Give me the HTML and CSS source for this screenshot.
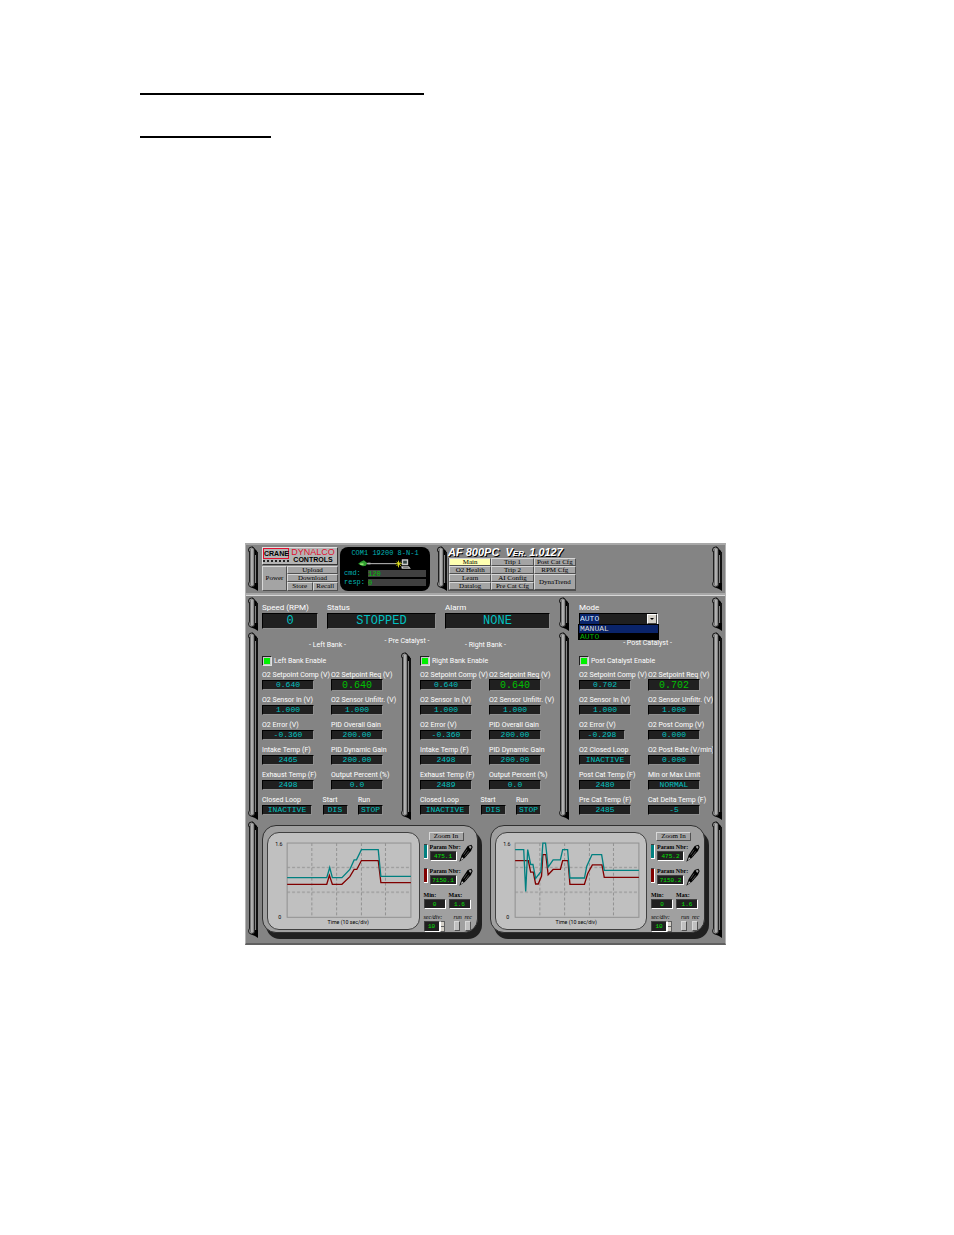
FILE: index.html
```html
<!doctype html>
<html lang="en">
<head>
<meta charset="utf-8">
<title>AF 800PC</title>
<link rel="stylesheet" href="styles.css">
</head>

<body>
<svg class="defs" aria-hidden="true">
	<defs>
		<linearGradient id="bar">
			<stop offset="0" stop-color="#585858"/>
			<stop offset="0.45" stop-color="#c4c4c4"/>
			<stop offset="1" stop-color="#707070"/>
		</linearGradient>
		<!-- rack handle: the middle stretches, the two caps keep their size -->
		<symbol id="handle">
			<path d="M4 0l5 5 1 4H7z" fill="#000"/>
			<rect x="8" y="6" width="2" height="100%" fill="#101010"/>
			<circle cx="3.5" cy="4" r="3" fill="#909090" stroke="#101010"/>
			<rect x="1" y="5" width="6" height="100%" fill="#202020"/>
			<rect x="2" y="3" width="4" height="100%" fill="url(#bar)"/>
			<svg y="100%" overflow="visible">
				<rect x="0" y="-5" width="12" height="6" fill="#848484"/>
				<path d="M2-8h8V0L7-2 2-4z" fill="#000"/>
				<circle cx="3.5" cy="-7" r="3" fill="#909090" stroke="#202020"/>
				<rect x="2" y="-11" width="4" height="5" fill="url(#bar)"/>
			</svg>
		</symbol>
		<symbol id="pen" viewBox="0 0 42 54">
			<path d="M1 53L8 33 26 6 37 2l4 7-5 12-19 21z" fill="#000"/>
			<path d="M29 8l5-3 4 4-4 6z" fill="#a0a0a0"/>
			<path d="M14 32l10-15M18 37l11-15" stroke="#707070" stroke-width="2"/>
			<path d="M9 40l5 3-9 6z" fill="#c8c8c8"/>
		</symbol>
		<pattern id="grid" width="375" height="225" patternUnits="userSpaceOnUse">
			<path d="M75 0v225M150 0v225M225 0v225M298 0v225M0 74h375M0 149h375" fill="none" stroke="#909090" stroke-width="3" stroke-dasharray="9 6"/>
		</pattern>
	</defs>
</svg>

<div class="page">
	<hr class="rule rule-long">
	<hr class="rule rule-short">

	<main class="app">
		<header class="top">
			<svg class="handle"><use href="#handle"/></svg>
			<div class="maker">
				<div class="logo">
					<div class="crane"><b>CRANE</b><i></i></div>
					<div class="dynalco"><span>DYNALCO</span><b>CONTROLS</b></div>
				</div>
				<div class="keys">
					<button class="power">Power</button>
					<button class="wide">Upload</button>
					<button class="wide">Download</button>
					<button>Store</button>
					<button>Recall</button>
				</div>
			</div>
			<div class="com">
				<div>COM1 19200 8-N-1</div>
				<svg class="link" viewBox="0 0 170 30">
					<path d="M24 14h102" stroke="#c0c0c0" stroke-width="3"/>
					<path d="M12 14l8-6 9-4 10 8-4 8-9 2-8-4z" fill="#30a030"/>
					<path d="M18 13h10v5H18z" fill="#90e070"/>
					<path d="M40 11h9v5h-9z" fill="#b0b0b0"/>
					<path d="M133 5v20M124 14h19M127 8l13 13M140 8l-13 13" stroke="#f0f020" stroke-width="2.5"/>
					<path d="M143 1h19v18h-19zM141 22h23l6 7h-27z" fill="#c8c8c8"/>
					<path d="M147 5h11v9h-11z" fill="#344"/>
					<path d="M147 25h16" stroke="#444" stroke-width="2"/>
				</svg>
				<label>cmd: <input value="120"></label>
				<label>resp: <input value="0"></label>
			</div>
			<svg class="handle"><use href="#handle"/></svg>
			<div class="menu">
				<h1>AF 800PC &nbsp;<span>V<small>ER.</small> 1.0127</span></h1>
				<nav>
					<button class="on">Main</button>
					<button>Trip 1</button>
					<button>Post Cat Cfg</button>
					<button>O2 Health</button>
					<button>Trip 2</button>
					<button>RPM Cfg</button>
					<button>Learn</button>
					<button>AI Config</button>
					<button class="tall">DynaTrend</button>
					<button>Datalog</button>
					<button>Pre Cat Cfg</button>
				</nav>
			</div>
			<svg class="handle last"><use href="#handle"/></svg>
		</header>

		<section class="state">
			<svg class="handle"><use href="#handle"/></svg>
			<div class="status">
				<label class="field">Speed (RPM)<output>0</output></label>
				<label class="field">Status<output>STOPPED</output></label>
				<label class="field">Alarm<output>NONE</output></label>
			</div>
			<svg class="handle"><use href="#handle"/></svg>
			<div class="mode">
				<label for="mode">Mode</label>
				<select id="mode"><option>AUTO</option><option>MANUAL</option></select>
				<i class="arrow"></i>
				<ul class="list"><li class="sel">MANUAL</li><li>AUTO</li></ul>
			</div>
			<svg class="handle last"><use href="#handle"/></svg>
		</section>

		<section class="banks">
			<svg class="handle"><use href="#handle"/></svg>
			<div class="bank">
				<h2>- Left Bank -</h2>
				<label class="enable"><input type="checkbox" checked>Left Bank Enable</label>
				<div class="fields">
					<label class="field">O2 Setpoint Comp (V)<output>0.640</output></label>
					<label class="field">O2 Setpoint Req (V)<input value="0.640"></label>
					<label class="field">O2 Sensor In (V)<output>1.000</output></label>
					<label class="field">O2 Sensor Unfiltr. (V)<output>1.000</output></label>
					<label class="field">O2 Error (V)<output>-0.360</output></label>
					<label class="field">PID Overall Gain<output>200.00</output></label>
					<label class="field">Intake Temp (F)<output>2465</output></label>
					<label class="field">PID Dynamic Gain<output>200.00</output></label>
					<label class="field">Exhaust Temp (F)<output>2498</output></label>
					<label class="field">Output Percent (%)<output>0.0</output></label>
				</div>
				<div class="loop">
					<label class="field">Closed Loop<output>INACTIVE</output></label>
					<label class="field">Start<output>DIS</output></label>
					<label class="field">Run<output>STOP</output></label>
				</div>
			</div>
			<div class="middle">
				<h2>- Pre Catalyst -</h2>
				<svg class="handle"><use href="#handle"/></svg>
			</div>
			<div class="bank">
				<h2>- Right Bank -</h2>
				<label class="enable"><input type="checkbox" checked>Right Bank Enable</label>
				<div class="fields">
					<label class="field">O2 Setpoint Comp (V)<output>0.640</output></label>
					<label class="field">O2 Setpoint Req (V)<input value="0.640"></label>
					<label class="field">O2 Sensor In (V)<output>1.000</output></label>
					<label class="field">O2 Sensor Unfiltr. (V)<output>1.000</output></label>
					<label class="field">O2 Error (V)<output>-0.360</output></label>
					<label class="field">PID Overall Gain<output>200.00</output></label>
					<label class="field">Intake Temp (F)<output>2498</output></label>
					<label class="field">PID Dynamic Gain<output>200.00</output></label>
					<label class="field">Exhaust Temp (F)<output>2489</output></label>
					<label class="field">Output Percent (%)<output>0.0</output></label>
				</div>
				<div class="loop">
					<label class="field">Closed Loop<output>INACTIVE</output></label>
					<label class="field">Start<output>DIS</output></label>
					<label class="field">Run<output>STOP</output></label>
				</div>
			</div>
			<svg class="handle"><use href="#handle"/></svg>
			<div class="bank post">
				<h2>- Post Catalyst -</h2>
				<label class="enable"><input type="checkbox" checked>Post Catalyst Enable</label>
				<div class="fields">
					<label class="field">O2 Setpoint Comp (V)<output>0.702</output></label>
					<label class="field">O2 Setpoint Req (V)<input value="0.702"></label>
					<label class="field">O2 Sensor In (V)<output>1.000</output></label>
					<label class="field">O2 Sensor Unfiltr. (V)<output>1.000</output></label>
					<label class="field short">O2 Error (V)<output>-0.298</output></label>
					<label class="field">O2 Post Comp (V)<output>0.000</output></label>
					<label class="field">O2 Closed Loop<output>INACTIVE</output></label>
					<label class="field">O2 Post Rate (V/min)<output>0.000</output></label>
					<label class="field">Post Cat Temp (F)<output>2480</output></label>
					<label class="field">Min or Max Limit<output>NORMAL</output></label>
					<label class="field">Pre Cat Temp (F)<output>2485</output></label>
					<label class="field">Cat Delta Temp (F)<output>-5</output></label>
				</div>
			</div>
			<svg class="handle last"><use href="#handle"/></svg>
		</section>

		<section class="trends">
			<svg class="handle"><use href="#handle"/></svg>
			<div class="trend">
				<svg class="screen" viewBox="0 0 456 288">
					<text x="22" y="37">1.6</text>
					<text x="31" y="259">0</text>
					<text x="243" y="274" text-anchor="middle">Time (10 sec/div)</text>
					<g transform="translate(58 29)" fill="none" stroke-width="4">
						<rect width="375" height="225" fill="url(#grid)" stroke="#909090" stroke-width="3"/>
						<polyline stroke="#800000" points="0,125 120,125 128,98 137,125 166,125 190,102 203,80 211,80 225,53 276,53 284,120 375,120"/>
						<polyline stroke="#008080" points="0,105 120,105 129,74 137,105 166,105 190,80 203,51 210,51 225,20 276,20 284,101 375,101"/>
					</g>
				</svg>
				<div class="controls">
					<button class="zoom">Zoom In</button>
					<div class="param">
						<i class="teal"></i>
						<label>Param Nbr:<input value="475.1"></label>
						<svg class="pen"><use href="#pen"/></svg>
					</div>
					<div class="param">
						<i class="red"></i>
						<label>Param Nbr:<input value="7150.1"></label>
						<svg class="pen"><use href="#pen"/></svg>
					</div>
					<div class="pair">
						<label>Min:<input value="0"></label>
						<label>Max:<input value="1.6"></label>
					</div>
					<div class="run">
						<label>sec/div:<span class="spin"><input value="10"><i class="steps"></i></span></label>
						<label>run<button></button></label>
						<label>rec<button></button></label>
					</div>
				</div>
			</div>
			<div class="trend">
				<svg class="screen" viewBox="0 0 456 288">
					<text x="22" y="37">1.6</text>
					<text x="31" y="259">0</text>
					<text x="243" y="274" text-anchor="middle">Time (10 sec/div)</text>
					<g transform="translate(58 29)" fill="none" stroke-width="4">
						<rect width="375" height="225" fill="url(#grid)" stroke="#909090" stroke-width="3"/>
						<polyline stroke="#800000" points="0,53 40,53 47,88 55,88 62,124 70,124 80,100 84,35 93,35 100,96 115,80 137,80 144,53 160,53 166,125 210,125 220,92 234,66 263,66 270,104 375,104"/>
						<polyline stroke="#008080" points="0,20 26,20 32,147 38,20 47,65 54,65 62,107 78,87 84,0 92,0 100,73 115,51 137,51 144,20 159,20 166,106 210,106 217,70 233,35 262,35 270,83 375,83"/>
					</g>
				</svg>
				<div class="controls">
					<button class="zoom">Zoom In</button>
					<div class="param">
						<i class="teal"></i>
						<label>Param Nbr:<input value="475.2"></label>
						<svg class="pen"><use href="#pen"/></svg>
					</div>
					<div class="param">
						<i class="red"></i>
						<label>Param Nbr:<input value="7150.2"></label>
						<svg class="pen"><use href="#pen"/></svg>
					</div>
					<div class="pair">
						<label>Min:<input value="0"></label>
						<label>Max:<input value="1.6"></label>
					</div>
					<div class="run">
						<label>sec/div:<span class="spin"><input value="10"><i class="steps"></i></span></label>
						<label>run<button></button></label>
						<label>rec<button></button></label>
					</div>
				</div>
			</div>
			<svg class="handle last"><use href="#handle"/></svg>
		</section>
	</main>
</div>
</body>
</html>
```
FILE: styles.css
```css
* {margin:0; padding:0; box-sizing:border-box; list-style:none;}

body {background:#fff; font:7px/10px Roboto, "Liberation Sans", Arial, sans-serif; color:#fff;}
input, select, button {font:inherit; color:inherit; border:0; border-radius:0; min-width:0; appearance:none;}
.defs {position:absolute; width:0; height:0;}

.page {padding:93px 123px 40px 140px;}
.rule {height:2px; border:0; background:#000;}
.rule-long {width:284px; margin-bottom:41px;}
.rule-short {width:131px; margin-bottom:405px;}

.app {max-width:481px; margin:0 auto; background:#848484; border:1px solid #b4b4b4; border-top:2px solid #a8a8a8; border-bottom:2px solid #606060;}
.top, .state, .banks, .trends {display:flex; padding:0 1px 0 2px;}
.handle {flex:none; width:12px; height:auto; align-self:stretch; display:block;}
.last {margin-left:auto;}

/* header */
.top {height:51px; padding-top:1px; padding-bottom:4px; border-bottom:1px solid #d8d8d8; box-shadow:inset 0 -2px #a8a8a8;}
.maker {width:76px; margin:1px 0 0 2px;}
.logo {display:flex; height:18px; background:#b4b4b4; border:1px solid #e0e0e0; border-right-color:#333; border-bottom-color:#333;}
.crane {width:26px; color:#000; font:bold 7px/9px "Liberation Sans", Arial, sans-serif;}
.crane b {display:block; height:11px; border:1px solid #e01030; text-align:center;}
.crane i {display:block; height:2px; margin-top:1px; border-top:2px dotted #222;}
.dynalco {flex:1; text-align:center; color:#e01030; font:9px/9px "Liberation Sans", Arial, sans-serif;}
.dynalco span {display:block; height:8px; line-height:8px;}
.dynalco b {display:block; color:#000; font-size:7px; line-height:7px;}

button {background:#a4a4a4; color:#000; font:7px/7px "Liberation Serif", serif; text-align:center; white-space:nowrap; border:1px solid; border-color:#d8d8d8 #505050 #505050 #d8d8d8;}
.keys {display:grid; grid-template-columns:25px 1fr 1fr; grid-template-rows:8px 8px 9px; margin-top:1px;}
.power {grid-row:span 3;}
.wide {grid-column:span 2;}

.com {width:90px; height:44px; margin:1px 0 0 2px; padding:2px 4px; background:#000; border-radius:8px; color:#00b4b4; font:7px/9px "Liberation Mono", monospace; text-align:center;}
.com div {height:10px; white-space:nowrap;}
.link {display:block; width:57px; height:10px; margin:0 0 1px 10px;}
.com label {display:grid; grid-template-columns:24px 1fr; height:7px; line-height:7px; margin-bottom:2px; text-align:left; white-space:nowrap;}
.com input {height:7px; background:#404040; color:#00c000; width:100%;}
.com + .handle {margin-left:7px;}

.menu {width:128px; margin-left:-1px;}
h1 {height:12px; font:italic bold 11px/12px "Liberation Sans", Arial, sans-serif; text-shadow:1px 1px #000; white-space:nowrap;}
h1 small {font-size:8px;}
nav {display:grid; grid-template-columns:repeat(3, 1fr); grid-template-rows:repeat(4, 8px); border:1px solid #505050; border-width:0 0 1px 1px;}
.on {background:#ffffb0;}
.tall {grid-row:span 2;}

/* fields */
.field {display:block; white-space:nowrap; height:20px;}
.field output, .field input {display:block; width:100%; height:10px; background:#202020; border:1px solid; border-color:#000 #909090 #909090 #000; color:#00c0c0; font:8px/8px "Liberation Mono", monospace; text-align:center;}
.field input {height:12px; margin-top:-1px; color:#00c000; font-size:10px; line-height:10px;}

/* state row */
.state {height:36px; padding-top:1px; padding-bottom:1px; font-size:8px;}
.status {display:grid; grid-template-columns:56px 109px 105px; column-gap:9px; margin:6px 9px 0 2px;}
.status output {height:16px; font-size:12px; line-height:14px;}
.mode {position:relative; width:79px; margin:6px 0 0 8px;}
.mode label {display:block; height:10px;}
.mode select {display:block; width:100%; height:12px; background:linear-gradient(90deg, #0a246a 19px, #202020 0); border:1px solid #000; border-right-color:#fff; border-bottom-color:#fff; color:#d8e8ff; font:8px/10px "Liberation Mono", monospace;}
.arrow {position:absolute; right:1px; top:11px; width:10px; height:10px; background:#d4d0c8; border:1px solid; border-color:#fff #444 #444 #fff; pointer-events:none;}
.arrow:after {content:""; display:block; margin:3px 0 0 2px; width:0; border:2px solid transparent; border-top-color:#000;}
.list {position:absolute; left:-1px; top:21px; width:81px; background:#000; border:1px solid #000; border-bottom:0; font:8px/8px "Liberation Mono", monospace; color:#00b400;}
.list li {height:7px; padding-left:1px;}
.list .sel {height:8px; background:#0a246a; color:#d8d8d8;}

/* banks */
.banks {height:189px; padding-bottom:1px;}
.bank {width:121px; margin:8px 0 0 2px;}
h2 {height:10px; font-size:7px; font-weight:normal; line-height:10px; text-align:center; white-space:nowrap;}
.bank h2 {padding-left:10px;}
.bank .enable {display:flex; align-items:center; gap:2px; height:12px; margin:5px 0 3px; white-space:nowrap;}
.enable input {width:10px; height:10px; background:#00f000; border:1px solid #202020; border-right-color:#e0e0e0; border-bottom-color:#e0e0e0; box-shadow:inset 0 0 0 1px #c8c8c8;}
.fields {display:grid; grid-template-columns:52px 52px; justify-content:space-between; row-gap:5px;}
.loop {display:grid; grid-template-columns:50px 25px 25px; justify-content:space-between; margin-top:5px;}
.middle {display:flex; flex-direction:column; width:12px; margin:4px 0 0 18px;}
.middle h2 {display:flex; justify-content:center; height:16px;}
.middle .handle {flex:1; align-self:auto;}
.middle + .bank {margin-left:7px;}
.middle + .bank + .handle {margin-left:18px;}
.post {margin-left:8px;}
.post h2 {padding-left:16px; margin-top:-2px; margin-bottom:7px;}
.short output {width:46px;}

/* trends */
.trends {height:122px; padding-bottom:5px;}
.trend {display:flex; flex:1; min-width:0; height:108px; margin:4px 3px 0 2px; padding:6px 4px 2px; background:#a0a0a0; border:1px solid #303030; border-radius:14px; box-shadow:4px 6px #202020; color:#000;}
.trend + .trend {margin:4px 7px 0 9px;}
.screen {flex:1; min-width:0; height:98px; background:#c0c0c0; border:1px solid #404040; border-radius:12px; font:16px Roboto, "Liberation Sans", sans-serif;}
.controls {flex:none; width:49px; margin-left:4px; font:bold 6px/7px "Liberation Serif", serif; white-space:nowrap;}
.controls label {display:block; height:18px;}
.controls input {display:block; width:100%; height:10px; background:#202020; border:1px solid; border-color:#404040 #fff #fff #404040; color:#00e000; font:6px/8px "Liberation Mono", monospace; text-align:center;}
.zoom {display:block; width:35px; height:9px; margin:0 0 3px 5px;}
.param {display:grid; grid-template-columns:4px 27px 14px; column-gap:2px; height:18px; margin-bottom:6px;}
.param i {height:15px; border:1px solid; border-color:#404040 #fff #fff #404040; border-left:0;}
.teal {background:#008080;}
.red {background:#800000;}
.pen {width:14px; height:18px;}
.pair {display:grid; grid-template-columns:22px 22px; column-gap:3px; margin-bottom:4px;}
.run {display:grid; grid-template-columns:25px 6px 6px; column-gap:5px; font-weight:normal; font-style:italic;}
.run button {display:block; width:6px; height:10px; background:#c0c0c0;}
.spin {display:flex; width:21px; height:11px;}
.spin input {width:16px; height:11px;}
.steps {width:5px; background:#d4d0c8; border:1px solid #606060; border-left-color:#fff; background-image:linear-gradient(#606060, #606060); background-size:100% 1px; background-position:0 4px; background-repeat:no-repeat;}
```
